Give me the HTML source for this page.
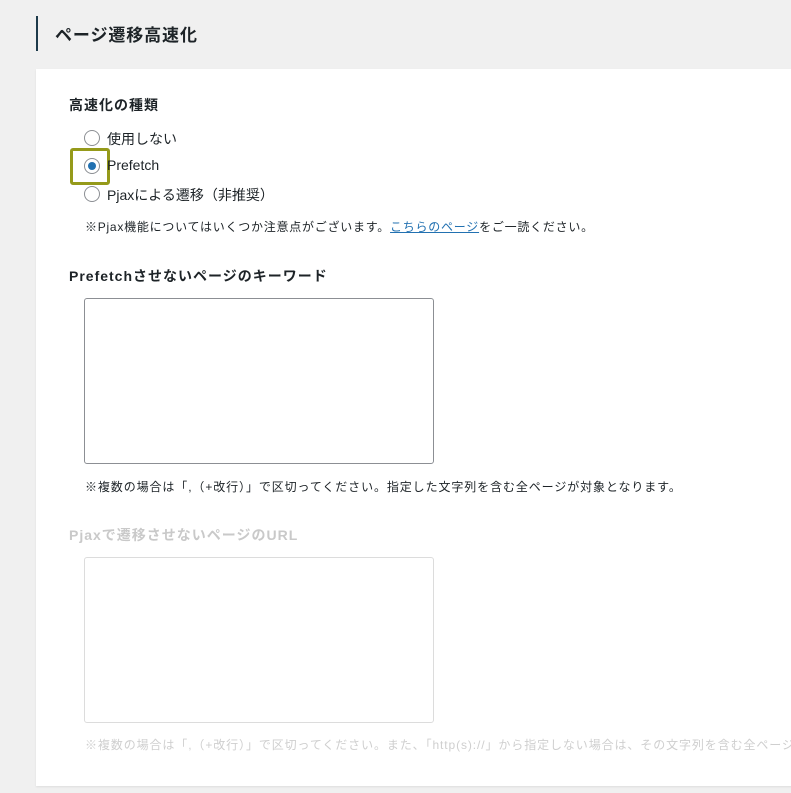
<!DOCTYPE html>
<html><head><meta charset="utf-8"><style>
body{margin:0;width:791px;height:793px;background:#f0f0f0;font-family:"Liberation Sans","Noto Sans CJK JP",sans-serif;color:#1d2327;position:relative;overflow:hidden}
.a{position:absolute;white-space:nowrap}
.bar{position:absolute;left:36px;top:16px;width:2px;height:35px;background:#1d3a4a}
.card{position:absolute;left:36px;top:69px;width:760px;height:717px;background:#fff;box-shadow:0 1px 2px rgba(0,0,0,.08)}
.r{position:absolute;left:84px;width:14px;height:14px;border:1px solid #8c8f94;border-radius:50%;background:#fff}
.ta{position:absolute;left:84px;width:348px;height:164px;border:1px solid #8c8f94;border-radius:3px;background:#fff}
.h{font-size:14px;font-weight:bold;letter-spacing:1px}
.t{font-size:14px}
.n{font-size:12px;letter-spacing:0.75px}
</style></head><body>
<div class="bar"></div>
<div class="a" style="left:55px;top:21px;font-size:17px;font-weight:bold;letter-spacing:0.9px">ページ遷移高速化</div>
<div class="card"></div>
<div class="a h" style="left:69px;top:95px">高速化の種類</div>
<div class="r" style="top:130px"></div>
<div class="a t" style="left:107px;top:129px">使用しない</div>
<div style="position:absolute;left:70px;top:148px;width:34px;height:31px;border:3px solid #959a1a;border-radius:3px"></div>
<div class="r" style="top:158px"><div style="position:absolute;left:3px;top:3px;width:8px;height:8px;border-radius:50%;background:#2271b1"></div></div>
<div class="a t" style="left:107px;top:157px">Prefetch</div>
<div class="r" style="top:186px"></div>
<div class="a t" style="left:107px;top:185px">Pjaxによる遷移（非推奨）</div>
<div class="a n" style="left:85px;top:218px">※Pjax機能についてはいくつか注意点がございます。<span style="color:#2271b1;text-decoration:underline">こちらのページ</span>をご一読ください。</div>
<div class="a h" style="left:69px;top:266px">Prefetchさせないページのキーワード</div>
<div class="ta" style="top:298px"></div>
<div class="a n" style="left:85px;top:478px;letter-spacing:0.9px">※複数の場合は「,（+改行）」で区切ってください。指定した文字列を含む全ページが対象となります。</div>
<div class="a h" style="left:69px;top:525px;color:#c9c9c9">Pjaxで遷移させないページのURL</div>
<div class="ta" style="top:557px;border-color:#dcdcdc"></div>
<div class="a n" style="left:85px;top:736px;color:#cfcfcf;letter-spacing:0.9px">※複数の場合は「,（+改行）」で区切ってください。また、「http(s)://」から指定しない場合は、その文字列を含む全ページ</div>
</body></html>
